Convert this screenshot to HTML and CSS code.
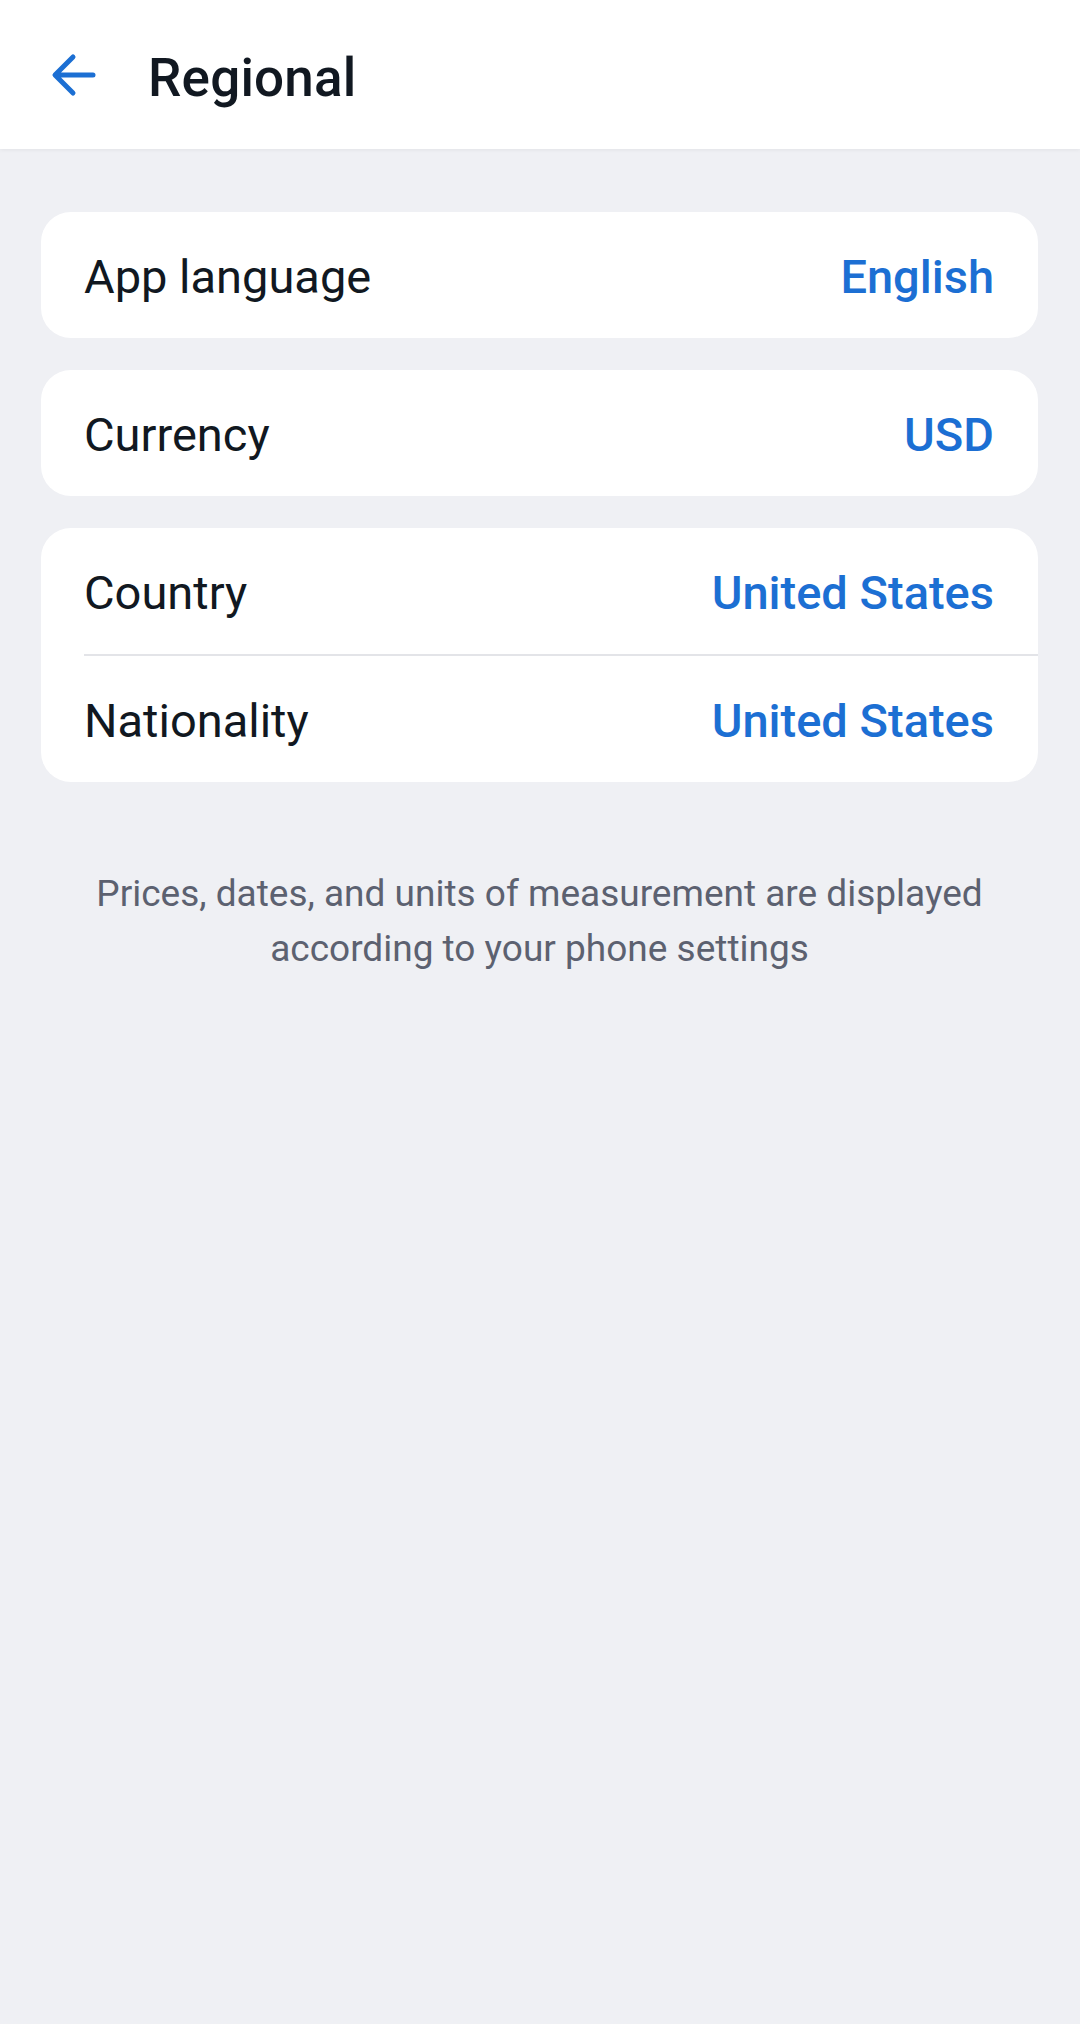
FILE: index.html
```html
<!DOCTYPE html>
<html lang="en">
<head>
    <meta charset="UTF-8">
    <meta name="viewport" content="width=device-width, initial-scale=1.0">
    <title>Regional</title>
    <link rel="stylesheet" href="styles.css">
</head>
<body>
    <header class="topbar">
        <button class="back" aria-label="Back">
            <svg width="46" height="46" viewBox="0 0 46 46">
                <path d="M43 23 H6 M23 5 L5 23 L23 41" fill="none" stroke="#1c6fd3" stroke-width="5" stroke-linecap="round" stroke-linejoin="round"/>
            </svg>
        </button>
        <h1>Regional</h1>
    </header>

    <main class="content">
        <div class="card">
            <div class="row">
                <span class="label">App language</span>
                <span class="value">English</span>
            </div>
        </div>

        <div class="card">
            <div class="row">
                <span class="label">Currency</span>
                <span class="value">USD</span>
            </div>
        </div>

        <div class="card">
            <div class="row">
                <span class="label">Country</span>
                <span class="value">United States</span>
            </div>
            <div class="divider"></div>
            <div class="row">
                <span class="label">Nationality</span>
                <span class="value">United States</span>
            </div>
        </div>

        <p class="note">Prices, dates, and units of measurement are displayed according to your phone settings</p>
    </main>
</body>
</html>
```

FILE: styles.css
```css
body {
    margin: 0;
    font-family: Roboto, "Liberation Sans", sans-serif;
    background-color: #eff0f4;
    color: #111821;
    min-height: 100vh;
}
.topbar {
    background-color: white;
    height: 149px;
    display: flex;
    align-items: center;
    box-shadow: 0 1px 4px rgba(0,0,0,0.06);
}
.back {
    background: none;
    border: none;
    padding: 0;
    margin-left: 50px;
    width: 46px;
    height: 46px;
    cursor: pointer;
    display: flex;
}
.topbar h1 {
    margin: 6px 0 0 52px;
    font-size: 53px;
    font-weight: 500;
    letter-spacing: 0.2px;
}
.content {
    padding: 63px 42px 0 41px;
}
.card {
    background-color: white;
    border-radius: 30px;
    margin-bottom: 32px;
}
.row {
    height: 126px;
    display: flex;
    align-items: center;
    justify-content: space-between;
    padding: 3px 44px 0 43px;
    box-sizing: border-box;
}
.label {
    font-size: 47px;
}
.value {
    font-size: 47px;
    font-weight: 500;
    color: #1c6fd3;
}
.divider {
    height: 2px;
    background-color: #e3e4e8;
    margin-left: 43px;
}
.note {
    margin: 84px 16px 0;
    text-align: center;
    font-size: 37px;
    line-height: 55px;
    color: #5c6170;
}
```
